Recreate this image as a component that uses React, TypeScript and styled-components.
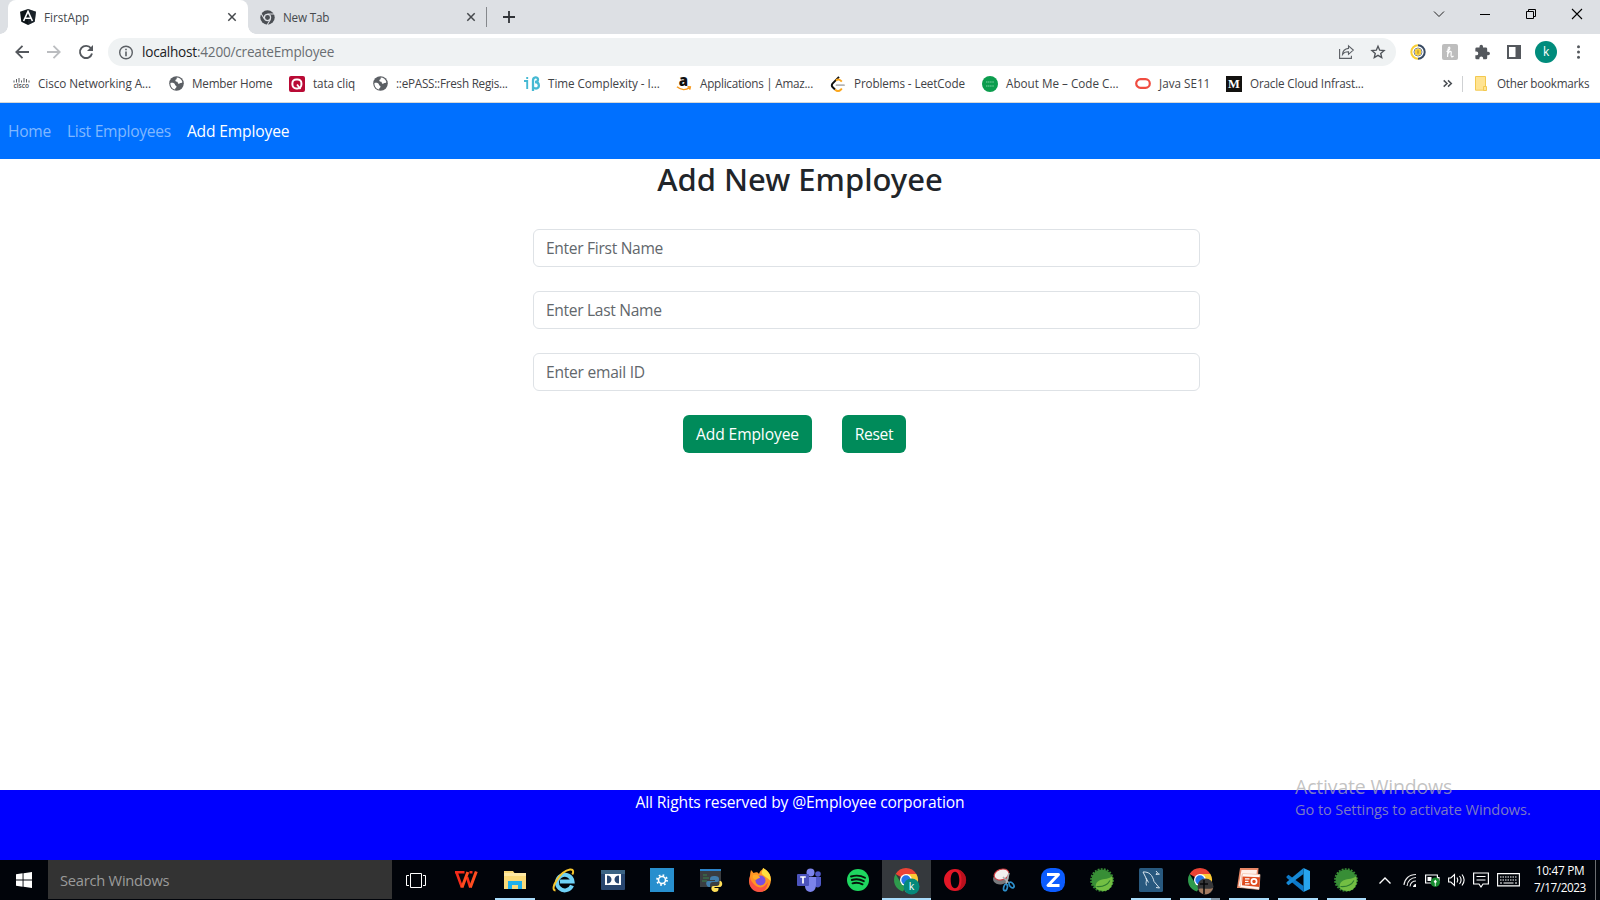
import React from "react";
import styled, { createGlobalStyle } from "styled-components";

const GlobalStyle = createGlobalStyle`
  *, *::before, *::after { box-sizing: border-box; }
  body {
    margin: 0;
    overflow: hidden;
    font-family: "Open Sans", "Noto Sans", sans-serif;
    background: #fff;
  }
`;

const Screen = styled.div`
  position: relative;
  display: flex;
  flex-direction: column;
  width: 1600px;
  height: 900px;
  overflow: hidden;
`;

const Glyph = styled.svg`
  display: block;
  flex: none;
  overflow: visible;
`;

/* ---------- tab strip ---------- */

const TabStrip = styled.div`
  display: flex;
  height: 34px;
  padding-left: 8px;
  background: #dde0e4;
`;

const Tab = styled.div<{ $active?: boolean }>`
  position: relative;
  display: flex;
  align-items: center;
  width: ${(p) => (p.$active ? 240 : 239)}px;
  padding: 0 12px;
  border-radius: 8px 8px 0 0;
  background: ${(p) => (p.$active ? "#fff" : "transparent")};
  color: #45494d;
  font-size: 11.7px;
  ${(p) =>
    p.$active &&
    `
    &::before, &::after {
      content: "";
      position: absolute;
      bottom: 0;
      width: 8px;
      height: 8px;
    }
    &::before { left: -8px; background: radial-gradient(circle at 0 0, transparent 7.5px, #fff 8px); }
    &::after { right: -8px; background: radial-gradient(circle at 100% 0, transparent 7.5px, #fff 8px); }
  `}
`;

const TabTitle = styled.span<{ $track?: number }>`
  flex: 1;
  margin-left: 8px;
  padding-bottom: 1px;
  letter-spacing: ${(p) => p.$track || 0}px;
  line-height: 16px;
`;

const TabDivider = styled.i`
  width: 1px;
  height: 20px;
  margin: 7px 16px 0 -1px;
  background: #85888c;
`;

const NewTab = styled.div`
  display: flex;
  align-items: center;
  flex: 1;
`;

const WindowControls = styled.div`
  display: flex;
  gap: 36px;
  align-items: center;
  height: 28px;
  padding-right: 18px;
`;

/* ---------- address bar ---------- */

const Toolbar = styled.div`
  display: flex;
  align-items: center;
  height: 36px;
  padding-left: 15px;
`;

const NavButtons = styled.div`
  display: flex;
  gap: 18px;
  width: 93px;
`;

const AddressBar = styled.div`
  display: flex;
  align-items: center;
  width: 1288px;
  height: 28px;
  padding: 0 11px;
  border-radius: 14px;
  background: #eff2f3;
  font-size: 13.6px;
  line-height: 20px;
  color: #6a6e72;
`;

const Url = styled.span`
  flex: 1;
  margin-left: 8px;
  letter-spacing: -0.22px;
  b {
    font-weight: 400;
    color: #202124;
  }
`;

const AddressActions = styled.div`
  display: flex;
  align-items: center;
  gap: 17px;
`;

const Extensions = styled.div`
  display: flex;
  align-items: center;
  gap: 16.3px;
  margin-left: 14px;
`;

const HoneyBadge = styled.span`
  display: grid;
  place-items: center;
  width: 16px;
  height: 16px;
  border-radius: 2px;
  background: #bdbdbd;
`;

const Avatar = styled.span`
  display: grid;
  place-items: center;
  width: 22px;
  height: 22px;
  margin: 0 -2px;
  border-radius: 50%;
  background: #008c7c;
  color: #fff;
  font-size: 12px;
  line-height: 20px;
`;

/* ---------- bookmarks ---------- */

const BookmarksBar = styled.div`
  display: flex;
  align-items: center;
  height: 33px;
  padding: 0 11px 5px 13px;
  border-bottom: 1px solid #d5d8d8;
  color: #3f4246;
  font-size: 11.7px;
  line-height: 17px;
`;

const Bookmark = styled.div<{ $width: number; $gap?: number; $track?: number }>`
  display: flex;
  align-items: center;
  gap: ${(p) => p.$gap || 8}px;
  flex: none;
  width: ${(p) => p.$width}px;
  letter-spacing: ${(p) => p.$track || 0}px;
  white-space: nowrap;
`;

const BookmarksEnd = styled.div`
  display: flex;
  align-items: center;
  margin-left: auto;
`;

const BarDivider = styled.i`
  width: 1px;
  height: 16px;
  margin: 0 12px 0 10px;
  background: #cfd1d3;
`;

const OtherBookmarks = styled.span`
  width: 92px;
  margin-left: 9px;
  letter-spacing: -0.24px;
  white-space: nowrap;
`;

/* ---------- page ---------- */

const Navbar = styled.nav`
  display: flex;
  align-items: center;
  gap: 16px;
  height: 56px;
  padding: 0 8px;
  background: #0070ff;
  font-size: 15.6px;
`;

const NavLink = styled.a<{ $active?: boolean; $track: number }>`
  color: ${(p) => (p.$active ? "#fff" : "#80b8ff")};
  letter-spacing: ${(p) => p.$track}px;
  line-height: 25px;
`;

const Main = styled.main`
  display: flex;
  flex-direction: column;
  flex: 1;
`;

const Title = styled.h2`
  margin: 1px 0 31px;
  color: #212529;
  font-family: "Noto Sans", sans-serif;
  font-size: 31px;
  font-weight: 500;
  line-height: 38px;
  text-align: center;
`;

const Form = styled.form`
  display: flex;
  flex-direction: column;
  gap: 24px;
  width: 667px;
  margin-left: 533px;
`;

const Field = styled.input<{ $track: number }>`
  height: 38px;
  padding: 0 12px;
  border: 1px solid #dee2e6;
  border-radius: 6px;
  outline: none;
  font: 400 15.6px/24px "Open Sans", sans-serif;
  letter-spacing: ${(p) => p.$track}px;
  &::placeholder {
    color: #62676c;
    opacity: 1;
  }
`;

const Actions = styled.div`
  display: flex;
  gap: 30px;
  padding-left: 150px;
`;

const Button = styled.button<{ $width: number; $track: number }>`
  width: ${(p) => p.$width}px;
  height: 38px;
  padding: 0;
  border: 0;
  border-radius: 6px;
  background: #008b5a;
  color: #fff;
  font: 400 15.6px/24px "Open Sans", sans-serif;
  letter-spacing: ${(p) => p.$track}px;
`;

const Footer = styled.footer`
  height: 70px;
  background: #0000ff;
  color: #fff;
  font-size: 15.6px;
  letter-spacing: -0.13px;
  line-height: 24px;
  text-align: center;
`;

const Activation = styled.div`
  position: absolute;
  left: 1295px;
  top: 774px;
  color: rgba(172, 172, 172, 0.72);
  font-size: 19.5px;
  letter-spacing: -0.18px;
  line-height: 26px;
  p {
    margin: -1px 0 0;
    font-size: 14.6px;
    letter-spacing: -0.1px;
    line-height: 20px;
  }
`;

/* ---------- taskbar ---------- */

const Taskbar = styled.div`
  display: flex;
  height: 40px;
  background: #01040a;
`;

const Start = styled.div`
  display: grid;
  flex: none;
  place-items: center;
  width: 48px;
`;

const Search = styled.div`
  flex: none;
  width: 344px;
  height: 39px;
  padding-left: 12px;
  background: #333;
  color: #9b9b9b;
  font-size: 14.7px;
  letter-spacing: -0.25px;
  line-height: 41px;
`;

const Apps = styled.div`
  display: grid;
  flex: none;
  grid-template-columns: 50px repeat(19, 48.9px);
`;

const TaskButton = styled.div<{ $open?: boolean; $active?: boolean; $stacked?: boolean }>`
  position: relative;
  display: grid;
  place-items: center;
  background: ${(p) => (p.$active ? "#35393d" : "transparent")};
  &:first-child {
    padding-right: 2px;
  }
  &::after {
    content: "";
    display: ${(p) => (p.$open || p.$active ? "block" : "none")};
    position: absolute;
    left: ${(p) => (p.$active ? 0 : 4.5)}px;
    right: ${(p) => (p.$active ? 0 : 4.5)}px;
    bottom: 0;
    height: 2px;
    background: ${(p) => (p.$stacked ? "linear-gradient(90deg, #a9dcfb 31px, #8196a6 31px)" : "#a9dcfb")};
  }
`;

const Tray = styled.div`
  display: flex;
  flex: none;
  align-items: center;
  gap: 8px;
  margin-left: auto;
`;

const Clock = styled.div`
  width: 60px;
  margin-left: 2px;
  padding-bottom: 3px;
  color: #fff;
  font-size: 11.8px;
  line-height: 17px;
  text-align: center;
`;

const ClockLine = styled.div<{ $track: number }>`
  letter-spacing: ${(p) => p.$track}px;
`;

const ShowDesktop = styled.i`
  align-self: stretch;
  width: 5px;
  margin-left: -3px;
  border-left: 1px solid #6b6d70;
`;

const SvgLabel = styled.text<{ $size: number; $weight?: number; $family?: string }>`
  font-family: ${(p) => p.$family || '"Open Sans"'}, sans-serif;
  font-size: ${(p) => p.$size}px;
  font-weight: ${(p) => p.$weight || 400};
  letter-spacing: 0;
  text-anchor: middle;
`;

/* ---------- icons ---------- */

const CloseIcon = () => (
  <Glyph width="8" height="8" viewBox="0 0 8 8">
    <path d="M.3.3l7.4 7.4M7.7.3L.3 7.7" stroke="#45484c" strokeWidth="1.5" />
  </Glyph>
);

const AngularIcon = () => (
  <Glyph width="16" height="16" viewBox="0 0 16 16">
    <path d="M8 0l8 2.7-1.3 10.1L8 16l-6.700-3.200L0 2.700z" fill="#0d1418" />
    <path d="M8 0l8 2.700-1.300 10.100L8 16z" fill="#27303a" opacity=".5" />
    <path d="M3.600 12L8 2.500 12.400 12M5.600 9.300h4.800" fill="none" stroke="#fff" strokeWidth="1.600" />
  </Glyph>
);

const ChromeGray = () => (
  <Glyph width="15" height="15" viewBox="0 0 16 16">
    <circle cx="8" cy="8" r="7.700" fill="#4b4f54" />
    <path d="M8 4.300h7.400M4.800 9.850L1 3.500M11.200 9.850L7.600 16" stroke="#dde0e4" strokeWidth="1.100" />
    <circle cx="8" cy="8" r="3.300" fill="#4b4f54" stroke="#dde0e4" strokeWidth="1.300" />
  </Glyph>
);

const Globe = () => (
  <Glyph width="15" height="15" viewBox="0 0 16 16">
    <circle cx="8" cy="8" r="7.800" fill="#5b5f64" />
    <path d="M1.500 7.500C3.500 7 6.200 7.500 6.400 9.200c.1 1 1.700.8 1.600 2.300-.1 1.300-1.600 1.300-1.500 3C3.500 14 1.300 11 1.500 7.500z" fill="#fff" />
    <path d="M8.200 1.600c2.800 0 5.400 2 6.100 4.700-.7 1.600-1.800.5-2.600 1.500-.8 1-2.500.4-2.400-1 .1-1-2.600-.2-2.500-2 .1-1.300 1.800-.7 1.400-3.200z" fill="#fff" />
  </Glyph>
);

const ChromeColor = ({ children }: { children?: React.ReactNode }) => (
  <Glyph width="24" height="24" viewBox="0 0 24 24">
    <path d="M12 12L1.600 6A12 12 0 0 1 22.400 6L12 6z" fill="#ea4335" />
    <path d="M1.600 6L7 15l5 3-3 5.600A12 12 0 0 1 1.600 6z" fill="#2e9b4c" />
    <path d="M12 6h10.400A12 12 0 0 1 11 24l6-9z" fill="#fcc934" />
    <circle cx="12" cy="12" r="6" fill="#fff" />
    <circle cx="12" cy="12" r="4.700" fill="#2375e8" />
    {children}
  </Glyph>
);

const Spring = () => (
  <Glyph width="24" height="24" viewBox="0 0 24 24">
    <circle cx="12" cy="12" r="10.500" fill="#388e36" />
    <circle cx="12" cy="12" r="11" fill="none" stroke="#388e36" strokeWidth="1.700" strokeDasharray="1.900 1.240" />
    <path d="M22.300 8c-3 3.500-8 2-13 4.500-4.500 2.300-4 7-2.500 8.500 9 5 18 0 15.500-13z" fill="#73bf43" />
    <path d="M6.500 18.500c6 .5 11-1.500 13.500-6" fill="none" stroke="#2c7d30" strokeWidth="1.100" />
  </Glyph>
);

const extensionPuzzle =
  "M20.5 11H19V7a2 2 0 0 0-2-2h-4V3.500a2.500 2.500 0 0 0-5 0V5H4a2 2 0 0 0-2 2v3.800h1.500a2.700 2.700 0 0 1 0 5.400H2V20a2 2 0 0 0 2 2h3.800v-1.500a2.700 2.700 0 0 1 5.400 0V22H17a2 2 0 0 0 2-2v-4h1.500a2.500 2.500 0 0 0 0-5z";

/* ---------- sections ---------- */

const BrowserTabs = () => (
  <TabStrip>
    <Tab $active>
      <AngularIcon />
      <TabTitle>FirstApp</TabTitle>
      <CloseIcon />
    </Tab>
    <Tab>
      <ChromeGray />
      <TabTitle $track={-0.2}>New Tab</TabTitle>
      <CloseIcon />
    </Tab>
    <TabDivider />
    <NewTab>
      <Glyph width="12" height="12" viewBox="0 0 12 12">
        <path d="M6 0v12M0 6h12" stroke="#303337" strokeWidth="1.800" />
      </Glyph>
    </NewTab>
    <WindowControls>
      <Glyph width="10" height="6" viewBox="0 0 10 6"><path d="M0 .5l5 5 5-5" fill="none" stroke="#222" strokeWidth="1" /></Glyph>
      <Glyph width="10" height="10" viewBox="0 0 10 10"><path d="M0 5.500h10" stroke="#000" /></Glyph>
      <Glyph width="10" height="10" viewBox="0 0 10 10"><path d="M.5 2.500h7v7h-7zM2.500 2.500v-2h7v7h-2" fill="none" stroke="#000" /></Glyph>
      <Glyph width="10" height="10" viewBox="0 0 10 10"><path d="M0 0l10 10M10 0L0 10" stroke="#000" strokeWidth="1.100" /></Glyph>
    </WindowControls>
  </TabStrip>
);

const BrowserToolbar = () => (
  <Toolbar>
    <NavButtons>
      <Glyph width="14" height="14" viewBox="0 0 14 14"><path d="M14 7H1.500M7.500.8L1.300 7l6.200 6.200" fill="none" stroke="#54585d" strokeWidth="1.800" /></Glyph>
      <Glyph width="14" height="14" viewBox="0 0 14 14"><path d="M0 7h12.500M6.500.8L12.700 7l-6.200 6.200" fill="none" stroke="#bbbdc0" strokeWidth="1.800" /></Glyph>
      <Glyph width="14" height="14" viewBox="0 0 14 14"><path d="M12 3.300A6.100 6.100 0 1 0 13 8.500" fill="none" stroke="#54585d" strokeWidth="1.900" /><path d="M14 0v6H8z" fill="#54585d" /></Glyph>
    </NavButtons>
    <AddressBar>
      <Glyph width="15" height="15" viewBox="0 0 15 15">
        <circle cx="7" cy="7.500" r="6.300" fill="none" stroke="#5b5f64" strokeWidth="1.400" />
        <path d="M7 6.500v4.700M7 3.700v1.600" stroke="#5b5f64" strokeWidth="1.600" />
      </Glyph>
      <Url><b>localhost</b>:4200/createEmployee</Url>
      <AddressActions>
        <Glyph width="15" height="14" viewBox="0 0 15 14">
          <path d="M.6 4v9.400h11.800v-2.600" fill="none" stroke="#5b5f64" strokeWidth="1.100" />
          <path d="M9.500 .8l4.800 4.300-4.800 4.200V6.800c-2.800-.1-4.800.8-6 2.600.2-3.200 2.700-5.600 6-6z" fill="none" stroke="#5b5f64" strokeWidth="1.100" />
        </Glyph>
        <Glyph width="14" height="14" viewBox="0 0 24 24">
          <path d="M12 2l2.900 6.900 7.500.6-5.700 4.900 1.700 7.300L12 17.800l-6.400 3.900 1.700-7.300L1.600 9.500l7.500-.6z" fill="none" stroke="#4f5358" strokeWidth="2.300" />
        </Glyph>
      </AddressActions>
    </AddressBar>
    <Extensions>
      <Glyph width="16" height="16" viewBox="0 0 16 16">
        <path d="M8 1.300a6.700 6.700 0 0 0 0 13.400" fill="none" stroke="#f9cf36" strokeWidth="2" />
        <path d="M8 1.300a6.700 6.700 0 0 1 0 13.400" fill="none" stroke="#384b63" strokeWidth="2" />
        <path d="M8 4a4 4 0 0 0 0 8 4 4 0 0 0 0-8z" fill="none" stroke="#7b8492" strokeWidth="1" />
        <path d="M8 4.200L11 6v4l-3 1.800L5 10V6z" fill="#f9cf36" />
        <path d="M8 6.300v3.400" stroke="#9c8240" />
      </Glyph>
      <HoneyBadge>
        <Glyph width="10" height="12" viewBox="0 0 10 12">
          <path d="M1.500 5.500C5 5 5.500 1 4 1 2.600 1 3 5 2.600 11M2.800 8C4 5 6.200 4.500 6.200 6.500c0 2-.6 4 .3 4.300.8.2 1.500-.4 2-1" fill="none" stroke="#fff" strokeWidth="1.200" />
        </Glyph>
      </HoneyBadge>
      <Glyph width="16" height="16" viewBox="1.500 0 23 23"><path d={extensionPuzzle} fill="#54585d" /></Glyph>
      <Glyph width="14" height="14" viewBox="0 0 14 14">
        <path d="M1 1h12v12H1z" fill="#fff" stroke="#54585d" strokeWidth="2" />
        <path d="M8.500 0H14v14H8.500z" fill="#54585d" />
      </Glyph>
      <Avatar>k</Avatar>
      <Glyph width="15" height="14" viewBox="0 0 15 14">
        <g fill="#54585d"><circle cx="7.500" cy="1.700" r="1.500" /><circle cx="7.500" cy="7" r="1.500" /><circle cx="7.500" cy="12.300" r="1.500" /></g>
      </Glyph>
    </Extensions>
  </Toolbar>
);

const Bookmarks = () => (
  <BookmarksBar>
    <Bookmark $width={156} $track={-0.05}>
      <Glyph width="17" height="12" viewBox="0 0 17 12">
        <path d="M1 2.500v2M3.500 1v3.500M6 0v4.500M8.500 2.500v2M11 0v4.500M13.500 1v3.500M16 2.500v2" stroke="#4a4d50" strokeWidth=".9" />
        <SvgLabel x="8.300" y="10.200" $size={6.600} $weight={600} fill="#4a4d50">cisco</SvgLabel>
      </Glyph>
      Cisco Networking A...
    </Bookmark>
    <Bookmark $width={120} $track={-0.2}><Globe />Member Home</Bookmark>
    <Bookmark $width={84} $track={-0.1}>
      <Glyph width="16" height="16" viewBox="0 0 16 16">
        <rect width="16" height="16" rx="2" fill="#b90a35" />
        <rect x="3.400" y="3.400" width="9" height="9" rx="3.800" fill="none" stroke="#fff" strokeWidth="2" />
        <path d="M8 8.500l3.500 4.500" stroke="#fff" strokeWidth="1.800" />
      </Glyph>
      tata cliq
    </Bookmark>
    <Bookmark $width={151} $track={-0.24}><Globe />::ePASS::Fresh Regis...</Bookmark>
    <Bookmark $width={153} $track={-0.06}>
      <Glyph width="16" height="15" viewBox="0 0 16 15">
        <path d="M0 5h3.200v8M3.200 1v2" fill="none" stroke="#46b9d3" strokeWidth="1.900" />
        <path d="M9 15V4.500c0-4 5-4 5-1 0 2-1.500 2.500-3 2.500 5 0 5 6.500 1 6.500-1.500 0-2.500-.7-3-1.500" fill="none" stroke="#46b9d3" strokeWidth="2.300" />
      </Glyph>
      Time Complexity - I...
    </Bookmark>
    <Bookmark $width={154} $gap={9} $track={-0.25}>
      <Glyph width="14" height="15" viewBox="0 0 14 15">
        <SvgLabel x="6.500" y="9.500" $size={15} $weight={800} fill="#111">a</SvgLabel>
        <path d="M0 10.800c4 3.500 9 3.300 12.500.8M10.500 10.700l2.800.2-.6 2.800" fill="none" stroke="#f8991c" strokeWidth="1.500" />
      </Glyph>
      Applications | Amaz...
    </Bookmark>
    <Bookmark $width={151} $gap={9} $track={-0.12}>
      <Glyph width="14" height="16" viewBox="0 0 14 16">
        <path d="M8 .8L1.500 7.500C.5 9 .5 10 1.500 11l2.500 2.500" fill="none" stroke="#111" strokeWidth="1.900" />
        <path d="M4 13.500c2 2 4 2 6 0l.8-1M5 4.500c2-2 4-.8 5.800 1.200" fill="none" stroke="#fba61c" strokeWidth="1.900" />
        <path d="M5.500 9.200H13" stroke="#b5b5b5" strokeWidth="1.800" strokeLinecap="round" />
      </Glyph>
      Problems - LeetCode
    </Bookmark>
    <Bookmark $width={153}>
      <Glyph width="16" height="16" viewBox="0 0 16 16">
        <circle cx="8" cy="8" r="8" fill="#0c9d4e" />
        <path d="M4 6h8M4 10h8" stroke="#7fd0a4" strokeWidth="1.200" strokeDasharray="1.300 .5" />
      </Glyph>
      About Me – Code C...
    </Bookmark>
    <Bookmark $width={91}>
      <Glyph width="16" height="11" viewBox="0 0 16 11">
        <rect x="1.200" y="1.200" width="13.600" height="8.600" rx="4.300" fill="none" stroke="#f04c40" strokeWidth="2.200" />
      </Glyph>
      Java SE11
    </Bookmark>
    <Bookmark $width={140} $track={-0.18}>
      <Glyph width="16" height="16" viewBox="0 0 16 16">
        <rect width="16" height="16" fill="#12110f" />
        <SvgLabel x="8" y="12.300" $size={12.500} $weight={700} $family='"Liberation Serif"' fill="#fff">M</SvgLabel>
      </Glyph>
      Oracle Cloud Infrast...
    </Bookmark>
    <BookmarksEnd>
      <Glyph width="9" height="7" viewBox="0 0 9 7"><path d="M.7.4L4 3.500.7 6.600M5 .4l3.300 3.100L5 6.600" fill="none" stroke="#4b4f54" strokeWidth="1.500" /></Glyph>
      <BarDivider />
      <Glyph width="13" height="15" viewBox="0 0 13 15">
        <path d="M.5.5h10v13.700H.5z" fill="#ffe391" stroke="#f3c950" />
        <path d="M8.500 10.500h3v4h-3z" fill="#ffe391" stroke="#f3c950" />
      </Glyph>
      <OtherBookmarks>Other bookmarks</OtherBookmarks>
    </BookmarksEnd>
  </BookmarksBar>
);

const WindowsTaskbar = () => (
  <Taskbar>
    <Start>
      <Glyph width="16" height="16" viewBox="0 0 16 16">
        <path d="M0 2.200L6.600 1.300v6.200H0zM7.500 1.200L16 0v7.500H7.500zM0 8.400h6.600v6.300L0 13.800zM7.500 8.400H16V16l-8.500-1.200z" fill="#fff" />
      </Glyph>
    </Start>
    <Search>Search Windows</Search>
    <Apps>
      <TaskButton>
        <Glyph width="20" height="15" viewBox="0 0 20 15">
          <path d="M4.500.5h11v14h-11zM3 2.500H.5v10H3M17 2.500h2.500v10H17" fill="none" stroke="#fff" />
        </Glyph>
      </TaskButton>
      <TaskButton>
        <Glyph width="24" height="18" viewBox="0 0 24 18">
          <path d="M1 1.200h9.500M2.500 1.500L8 16.500M13 6l3.300 10.500M15.500 1.200h3" fill="none" stroke="#f52b1a" strokeWidth="2.600" />
          <path d="M8 16.500L13.800 1M16.300 16.500L22.300.5" fill="none" stroke="#ff4d20" strokeWidth="3" />
        </Glyph>
      </TaskButton>
      <TaskButton $open>
        <Glyph width="22" height="18" viewBox="0 0 22 18">
          <path d="M0 0h9l1.500 2H22v16H0z" fill="#fada78" />
          <path d="M0 2h22v3H0z" fill="#fff0b5" opacity=".7" />
          <path d="M4 18v-8h14v8h-4v-4H8v4z" fill="#1fb0ec" />
        </Glyph>
      </TaskButton>
      <TaskButton>
        <Glyph width="24" height="24" viewBox="0 0 24 24">
          <path d="M20 17.500A7.800 7.800 0 1 1 20.500 13.500H8" fill="none" stroke="#6fd2f7" strokeWidth="4" />
          <path d="M3.500 22.500C-3 22 8 3 18 1.500c4-.5 3.500 3 2.300 5" fill="none" stroke="#f6c52d" strokeWidth="2" />
        </Glyph>
      </TaskButton>
      <TaskButton>
        <Glyph width="24" height="20" viewBox="0 0 24 20">
          <rect width="24" height="20" rx="1" fill="#28466f" />
          <path d="M0 0h24v4H0z" fill="#3c6484" />
          <path d="M4 4h16v11H4z" fill="#fff" />
          <path d="M6 5.500c6 0 6 8 0 8zM18 5.500c-6 0-6 8 0 8z" fill="#28466f" />
        </Glyph>
      </TaskButton>
      <TaskButton>
        <Glyph width="24" height="24" viewBox="0 0 24 24">
          <path d="M0 0h24v24H0z" fill="#278fce" />
          <circle cx="12" cy="12" r="3.500" fill="none" stroke="#fff" strokeWidth="1.600" />
          <circle cx="12" cy="12" r="5" fill="none" stroke="#fff" strokeWidth="1.800" strokeDasharray="1.700 2.227" />
        </Glyph>
      </TaskButton>
      <TaskButton>
        <Glyph width="24" height="24" viewBox="0 0 24 24">
          <path d="M1 2h21v17H1z" fill="#3a3d40" />
          <path d="M1 1h21v2H1z" fill="#2c83ca" />
          <path d="M4 7h4M4 10h6M3 13h5" stroke="#388348" />
          <path d="M15 8c-3 0-4 1-4 3v1h5v1H9c-3 0-2 6 1 6h1v-2c0-2 1-3 3-3h4c2 0 2-1 2-3s-1-3-5-3z" fill="#417dab" />
          <path d="M15.500 24c3 0 4-1 4-3v-1h-4v-1h5c4 0 3-6 1-6h-1v2c0 2-1 3-3 3h-3c-3 0-3 5 1 6z" fill="#ffdf58" />
        </Glyph>
      </TaskButton>
      <TaskButton>
        <Glyph width="24" height="24" viewBox="0 0 24 24">
          <path d="M12 24C3 24-1 15 2 8c0-2 .5-4 1-6 1 1 2 2 2.500 3C8 4 10 4 11 6c1-4 4-4 4-6 7 4 9 9 7.500 15-1 5-5 9-10.500 9z" fill="#ff9424" />
          <path d="M12 24C3 24-.5 16 2 8c0 5 3 7 6 10 4 3 9 1 12-4-1 6-3 10-8 10z" fill="#f83650" opacity=".7" />
          <circle cx="12.500" cy="12.500" r="5" fill="#784ee0" />
          <path d="M5 7c4-1 7 1 7 3-2 0-3 1-4 2-3-1-4-3-3-5z" fill="#ffab28" />
          <path d="M15 0c7 4 8 8 7.500 13C20 10 17 9 14 6c-1-2 1-4 1-6z" fill="#ffdf3f" />
        </Glyph>
      </TaskButton>
      <TaskButton>
        <Glyph width="24" height="24" viewBox="0 0 24 24">
          <circle cx="21" cy="6" r="2.800" fill="#5059c9" />
          <path d="M17 9h7v7c0 3-3 4-5 3z" fill="#5059c9" />
          <circle cx="13.500" cy="4.500" r="4" fill="#7b83eb" />
          <path d="M8 9h11v8c0 9-11 9-11 1z" fill="#7b83eb" />
          <rect y="6" width="12" height="12" rx="1" fill="#4b53bc" />
          <path d="M3.200 9h5.600M6 9v6.500" stroke="#fff" strokeWidth="1.700" />
        </Glyph>
      </TaskButton>
      <TaskButton>
        <Glyph width="22" height="22" viewBox="0 0 22 22">
          <circle cx="11" cy="11" r="11" fill="#1ed760" />
          <path d="M4 7.500c5-1.500 10-1 14 1.300M4.800 11c4-1.200 8.500-.7 12 1.200M5.500 14.300c3.500-.9 7-.5 10 1" fill="none" stroke="#06140a" strokeWidth="1.900" strokeLinecap="round" />
        </Glyph>
      </TaskButton>
      <TaskButton $active>
        <ChromeColor>
          <circle cx="17.500" cy="18.500" r="8" fill="#05897b" />
          <SvgLabel x="17.500" y="22.300" $size={10.500} fill="#fff">k</SvgLabel>
        </ChromeColor>
      </TaskButton>
      <TaskButton>
        <Glyph width="22" height="22" viewBox="0 0 22 22">
          <path fillRule="evenodd" d="M11 0a11 11 0 1 0 0 22 11 11 0 0 0 0-22zm0 2.800c3 0 4.300 4 4.300 8.200S14 19.200 11 19.200 6.700 15.200 6.700 11 8 2.800 11 2.800z" fill="#e31727" />
          <path d="M14 .5c11 4 11 17 0 21 3-3 3.500-7 3.500-10.500S17 3.500 14 .5z" fill="#a70e19" opacity=".7" />
        </Glyph>
      </TaskButton>
      <TaskButton>
        <Glyph width="24" height="24" viewBox="0 0 24 24">
          <ellipse cx="9" cy="10.500" rx="8" ry="6" fill="#77797c" transform="rotate(-12 9 10.500)" />
          <ellipse cx="9.500" cy="6.500" rx="7.500" ry="5.300" fill="#f3f0f0" stroke="#d23d44" strokeWidth="1.100" transform="rotate(-18 9.500 6.500)" />
          <path d="M11 9l6 6M17 5l-3 11" stroke="#abb0b4" strokeWidth="1.600" />
          <ellipse cx="19.500" cy="17" rx="1.900" ry="3.300" transform="rotate(-38 19.500 17)" fill="none" stroke="#2d8fcb" strokeWidth="1.700" />
          <ellipse cx="13.500" cy="19.500" rx="1.800" ry="3.300" transform="rotate(15 13.500 19.500)" fill="none" stroke="#2d8fcb" strokeWidth="1.700" />
        </Glyph>
      </TaskButton>
      <TaskButton>
        <Glyph width="24" height="24" viewBox="0 0 24 24">
          <rect width="24" height="24" rx="9.500" fill="#0b5cff" />
          <path d="M6 6.500h11.500L7 17.500h11.500" fill="none" stroke="#fff" strokeWidth="3" strokeLinejoin="round" />
        </Glyph>
      </TaskButton>
      <TaskButton><Spring /></TaskButton>
      <TaskButton $open>
        <Glyph width="24" height="24" viewBox="0 0 24 24">
          <rect width="24" height="24" rx="1.500" fill="#28597f" />
          <path d="M7.500 17.500C6 14 8.500 13 7 10L4 4c6-.5 9.500 3 11 9.500L20.500 20l-3.500-.5M7 10l2.500 4.500M17 3l3 3.500M18 5l-1 1.500 3.500-.5" fill="none" stroke="#d6e4ee" strokeWidth="1" />
        </Glyph>
      </TaskButton>
      <TaskButton $open $stacked>
        <ChromeColor>
          <circle cx="17.500" cy="18.500" r="8" fill="#37383a" />
          <path d="M10.500 21c5-1.500 8 1 14.500-1-2.500 8-12.500 8.500-14.500 1z" fill="#a47c61" />
          <path d="M16 12v14M12 16h8" stroke="#08090b" strokeWidth="1.600" />
        </ChromeColor>
      </TaskButton>
      <TaskButton $open>
        <Glyph width="24" height="24" viewBox="0 0 24 24">
          <path d="M3 0h18.500L21 8 3 20 0 20z" fill="#e98867" />
          <path d="M4.500 2H20l-.5 4H5L3.500 18.500l-2-.3z" fill="#fff0e8" />
          <path d="M5.500 5.500l17.500 1-1 15L3 19.500z" fill="#fff8f4" stroke="#f3c0a8" strokeWidth=".7" />
          <path d="M5.500 8.500l17.500.7-.7 9.800L5 17.300z" fill="#df4c1e" />
          <path d="M8 10.800h4.500M8 13.300h3.500M8 15.800h4.500" stroke="#fff" strokeWidth="1.300" />
          <circle cx="17" cy="13.500" r="2.600" fill="#df4c1e" stroke="#fff" strokeWidth="1.700" />
        </Glyph>
      </TaskButton>
      <TaskButton $open>
        <Glyph width="24" height="24" viewBox="0 0 24 24">
          <path d="M17.500 0L24 3v18l-6.500 3z" fill="#27a5ee" />
          <path d="M.5 8.500l2-1.700L17.500 18v6L.5 9.800z" fill="#0d79c8" />
          <path d="M.5 15.500l2 1.700L17.500 6V0L.5 14.200z" fill="#1689d6" />
        </Glyph>
      </TaskButton>
      <TaskButton $open><Spring /></TaskButton>
    </Apps>
    <Tray>
      <Glyph width="12" height="7" viewBox="0 0 12 7"><path d="M.5 6.500L6 1l5.500 5.500" fill="none" stroke="#fff" strokeWidth="1.400" /></Glyph>
      <Glyph width="18" height="14" viewBox="0 0 18 14">
        <g fill="none" stroke="#eee" strokeWidth="1.100"><path d="M5 12C5.500 6 10 1.500 17 1.500M8 13c.5-5 4-8.500 9-8.500M11 13.500c.5-3.500 3-5.500 6-5.500" /></g>
        <path d="M14 14c0-1.500 1.500-3 3-3v3z" fill="#fff" />
      </Glyph>
      <Glyph width="15" height="14" viewBox="0 0 15 14">
        <path d="M.6 2h11.800v8H.6zM12.400 4.500H14v3h-1.600" fill="none" stroke="#fff" strokeWidth="1.200" />
        <path d="M2.500 4h4v4h-4z" fill="#fff" />
        <circle cx="10.300" cy="9.200" r="4.700" fill="#168b2e" />
        <path d="M10.300 6.500l1.600 2.300-1.600 1.700-1.600-1.700z" fill="#fff" />
        <path d="M10.300 10v3" stroke="#fff" strokeWidth=".8" />
      </Glyph>
      <Glyph width="17" height="14" viewBox="0 0 17 14">
        <path d="M.6 5h2.200L6.500 1.500v11L2.800 9H.6zM9 4.500c1 1.500 1 3.500 0 5M11.500 3c2 2.500 2 5.500 0 8M14 1.500c2.700 3.500 2.700 7.500 0 11" fill="none" stroke="#fff" strokeWidth="1.100" />
      </Glyph>
      <Glyph width="16" height="16" viewBox="0 0 16 16">
        <path d="M.6 1h14.800v11H10l-2 3-2-3H.6zM3.500 4.500h9M3.500 8h9" fill="none" stroke="#fff" strokeWidth="1.200" />
      </Glyph>
      <Glyph width="23" height="14" viewBox="0 0 23 14">
        <path d="M.6.6h21.800v12.300H.6z" fill="none" stroke="#fff" strokeWidth="1.100" />
        <path d="M3 4h17M3 7h17" stroke="#fff" strokeWidth="1.200" strokeDasharray="1.500 1" />
        <path d="M3 10h2M6.500 10h10M18 10h2" stroke="#fff" strokeWidth="1.200" />
      </Glyph>
      <Clock>
        <ClockLine $track={-0.28}>10:47 PM</ClockLine>
        <ClockLine $track={-0.45}>7/17/2023</ClockLine>
      </Clock>
      <ShowDesktop />
    </Tray>
  </Taskbar>
);

export default function App() {
  return (
    <>
      <GlobalStyle />
      <Screen>
        <BrowserTabs />
        <BrowserToolbar />
        <Bookmarks />
        <Navbar>
          <NavLink $track={-0.28}>Home</NavLink>
          <NavLink $track={-0.28}>List Employees</NavLink>
          <NavLink $active $track={-0.15}>Add Employee</NavLink>
        </Navbar>
        <Main>
          <Title>Add New Employee</Title>
          <Form>
            <Field $track={-0.31} placeholder="Enter First Name" />
            <Field $track={-0.32} placeholder="Enter Last Name" />
            <Field $track={-0.25} placeholder="Enter email ID" />
            <Actions>
              <Button type="button" $width={129} $track={-0.12}>Add Employee</Button>
              <Button type="button" $width={64} $track={-0.32}>Reset</Button>
            </Actions>
          </Form>
        </Main>
        <Footer>All Rights reserved by @Employee corporation</Footer>
        <Activation>
          Activate Windows
          <p>Go to Settings to activate Windows.</p>
        </Activation>
        <WindowsTaskbar />
      </Screen>
    </>
  );
}
